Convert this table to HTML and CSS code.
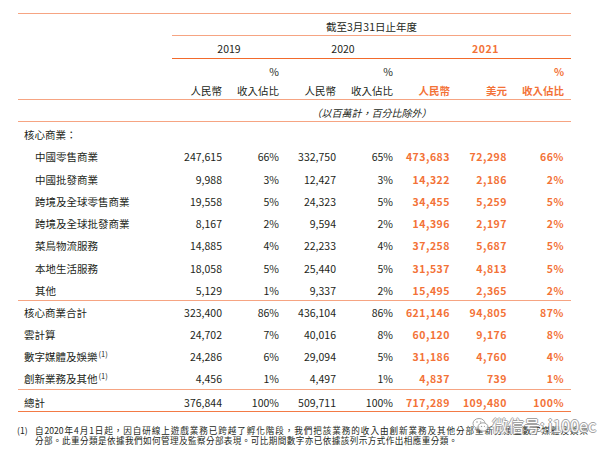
FILE: index.html
```html
<!DOCTYPE html>
<html lang="zh-Hant">
<head>
<meta charset="utf-8">
<link rel="stylesheet" href="styles.css">
</head>
<body>
<div class="page">
  <div class="table">
    <div class="row head-period">
      <div class="label"></div>
      <div class="period">截至3月31日止年度</div>
    </div>
    <div class="row head-years">
      <div class="label"></div>
      <div class="year y2">2019</div>
      <div class="year y2">2020</div>
      <div class="year y3 hl">2021</div>
    </div>
    <div class="row head-units">
      <div class="label"></div>
      <div class="unit"><span class="pct"></span><span>人民幣</span></div>
      <div class="unit"><span class="pct">%</span><span>收入佔比</span></div>
      <div class="unit"><span class="pct"></span><span>人民幣</span></div>
      <div class="unit"><span class="pct">%</span><span>收入佔比</span></div>
      <div class="unit hl"><span class="pct"></span><span>人民幣</span></div>
      <div class="unit hl"><span class="pct"></span><span>美元</span></div>
      <div class="unit hl"><span class="pct">%</span><span>收入佔比</span></div>
    </div>
    <div class="row head-note">
      <div class="label"></div>
      <div class="note">（以百萬計，百分比除外）</div>
    </div>

    <div class="section s1">
      <div class="row body"><div class="label">核心商業：</div></div>
      <div class="row body"><div class="label sub">中國零售商業</div><div class="n">247,615</div><div class="n">66%</div><div class="n">332,750</div><div class="n">65%</div><div class="n hl">473,683</div><div class="n hl">72,298</div><div class="n hl">66%</div></div>
      <div class="row body"><div class="label sub">中國批發商業</div><div class="n">9,988</div><div class="n">3%</div><div class="n">12,427</div><div class="n">3%</div><div class="n hl">14,322</div><div class="n hl">2,186</div><div class="n hl">2%</div></div>
      <div class="row body"><div class="label sub">跨境及全球零售商業</div><div class="n">19,558</div><div class="n">5%</div><div class="n">24,323</div><div class="n">5%</div><div class="n hl">34,455</div><div class="n hl">5,259</div><div class="n hl">5%</div></div>
      <div class="row body"><div class="label sub">跨境及全球批發商業</div><div class="n">8,167</div><div class="n">2%</div><div class="n">9,594</div><div class="n">2%</div><div class="n hl">14,396</div><div class="n hl">2,197</div><div class="n hl">2%</div></div>
      <div class="row body"><div class="label sub">菜鳥物流服務</div><div class="n">14,885</div><div class="n">4%</div><div class="n">22,233</div><div class="n">4%</div><div class="n hl">37,258</div><div class="n hl">5,687</div><div class="n hl">5%</div></div>
      <div class="row body"><div class="label sub">本地生活服務</div><div class="n">18,058</div><div class="n">5%</div><div class="n">25,440</div><div class="n">5%</div><div class="n hl">31,537</div><div class="n hl">4,813</div><div class="n hl">5%</div></div>
      <div class="row body"><div class="label sub">其他</div><div class="n">5,129</div><div class="n">1%</div><div class="n">9,337</div><div class="n">2%</div><div class="n hl">15,495</div><div class="n hl">2,365</div><div class="n hl">2%</div></div>
    </div>

    <div class="section s2">
      <div class="row body"><div class="label">核心商業合計</div><div class="n">323,400</div><div class="n">86%</div><div class="n">436,104</div><div class="n">86%</div><div class="n hl">621,146</div><div class="n hl">94,805</div><div class="n hl">87%</div></div>
      <div class="row body"><div class="label">雲計算</div><div class="n">24,702</div><div class="n">7%</div><div class="n">40,016</div><div class="n">8%</div><div class="n hl">60,120</div><div class="n hl">9,176</div><div class="n hl">8%</div></div>
      <div class="row body"><div class="label">數字媒體及娛樂<sup>(1)</sup></div><div class="n">24,286</div><div class="n">6%</div><div class="n">29,094</div><div class="n">5%</div><div class="n hl">31,186</div><div class="n hl">4,760</div><div class="n hl">4%</div></div>
      <div class="row body"><div class="label">創新業務及其他<sup>(1)</sup></div><div class="n">4,456</div><div class="n">1%</div><div class="n">4,497</div><div class="n">1%</div><div class="n hl">4,837</div><div class="n hl">739</div><div class="n hl">1%</div></div>
    </div>

    <div class="section s3">
      <div class="row body"><div class="label">總計</div><div class="n">376,844</div><div class="n">100%</div><div class="n">509,711</div><div class="n">100%</div><div class="n hl">717,289</div><div class="n hl">109,480</div><div class="n hl">100%</div></div>
    </div>
  </div>

  <div class="footnote">
    <div class="fn-mark">(1)</div>
    <div class="fn-text">
      <span class="fn-line1">自2020年4月1日起，因自研線上遊戲業務已跨越了孵化階段，我們把該業務的收入由創新業務及其他分部重新分類至數字媒體及娛樂</span>
      <span class="fn-line2">分部。此重分類是依據我們如何管理及監察分部表現。可比期間數字亦已依據該列示方式作出相應重分類。</span>
    </div>
  </div>

  <div class="watermark">
    <svg class="wm-icon" width="17" height="16" viewBox="0 0 17 16">
      <ellipse cx="7" cy="6.5" rx="6" ry="5" fill="#fff" stroke="#9a9a9a" stroke-width="1"/>
      <path d="M3.5 10.5 L3 13 L5.5 11.2" fill="#fff" stroke="#9a9a9a" stroke-width="0.9"/>
      <ellipse cx="11" cy="10" rx="5" ry="4.2" fill="#fff" stroke="#9a9a9a" stroke-width="1"/>
      <circle cx="5" cy="5" r="0.8" fill="#9a9a9a"/>
      <circle cx="8.6" cy="5" r="0.8" fill="#9a9a9a"/>
      <circle cx="9.6" cy="9.4" r="0.6" fill="#9a9a9a"/>
      <circle cx="12.4" cy="9.4" r="0.6" fill="#9a9a9a"/>
    </svg>
    <span class="wm-text">微信号: i100ec</span>
  </div>
</div>
</body>
</html>
```

FILE: styles.css
```css
* { box-sizing: border-box; }

html, body {
  margin: 0;
  padding: 0;
  background: #ffffff;
}

body {
  font-family: "Noto Sans CJK TC", "Noto Sans", sans-serif;
  color: #231f20;
  font-size: 10.5px;
  line-height: 14px;
}

.page {
  position: relative;
  width: 610px;
  height: 453px;
  padding: 13px 0 0 18px;
  overflow: hidden;
}

.table {
  width: 553px;
  border-top: 1px solid #f6a482;
}

.row {
  display: grid;
  grid-template-columns: 154px repeat(7, 57px);
}

.hl {
  color: #f37237;
  font-weight: 700;
  letter-spacing: 0.5px;
}

/* header */
.head-period { height: 22px; }
.period {
  grid-column: 2 / -1;
  text-align: center;
  padding-top: 6px;
  border-bottom: 1px solid #f6a482;
}

.head-years { height: 23px; }
.year {
  text-align: center;
  padding-top: 6px;
  border-bottom: 1px solid #f26a2c;
}
.year.y2 { grid-column: span 2; }
.year.y3 { grid-column: span 3; }

.head-units {
  height: 41px;
  border-bottom: 1px solid #f6a482;
}
.unit {
  display: flex;
  flex-direction: column;
  align-items: flex-end;
  padding: 6px 7px 0 0;
  gap: 5px;
}
.unit .pct { height: 14px; }
.unit.hl { letter-spacing: 0; }

.head-note {
  height: 22px;
  border-bottom: 1px solid #f6a482;
}
.note {
  grid-column: 2 / -1;
  text-align: center;
  font-style: italic;
  font-size: 10px;
  padding-top: 6px;
}

/* body */
.section.s1 { border-bottom: 1px solid #f6a482; }
.section.s2 { border-bottom: 1px solid #f6a482; }
.section.s3 { border-bottom: 1px solid #f37a45; }

.s1 .body { height: 22.3px; }
.s2 .body { height: 22px; }
.s3 .body { height: 21px; }

.body > div { padding-top: 6px; }
.s2 .body > div { padding-top: 5px; }

.label {
  padding-left: 6px;
  white-space: nowrap;
}
.label.sub { padding-left: 17px; }
.label sup {
  font-size: 7.5px;
  line-height: 0;
  vertical-align: 4px;
  margin-left: 1px;
}

.n {
  text-align: right;
  padding-right: 7px;
}

/* footnote */
.footnote {
  display: grid;
  grid-template-columns: 18px 553px;
  margin-left: -1px;
  margin-top: 14px;
  font-size: 8.6px;
  line-height: 9.5px;
}
.fn-text span { display: block; }
.fn-line1 {
  text-align: justify;
  text-align-last: justify;
}
.fn-line2 { letter-spacing: 0.4px; }

/* watermark overlay */
.watermark {
  position: absolute;
  left: 472px;
  top: 415px;
  display: flex;
  align-items: center;
  gap: 3px;
  opacity: 0.9;
}
.wm-text {
  font-size: 16px;
  line-height: 20px;
  color: #ffffff;
  text-shadow: 1px 0 0 #9a9a9a, -1px 0 0 #9a9a9a, 0 1px 0 #9a9a9a, 0 -1px 0 #9a9a9a;
}
```
